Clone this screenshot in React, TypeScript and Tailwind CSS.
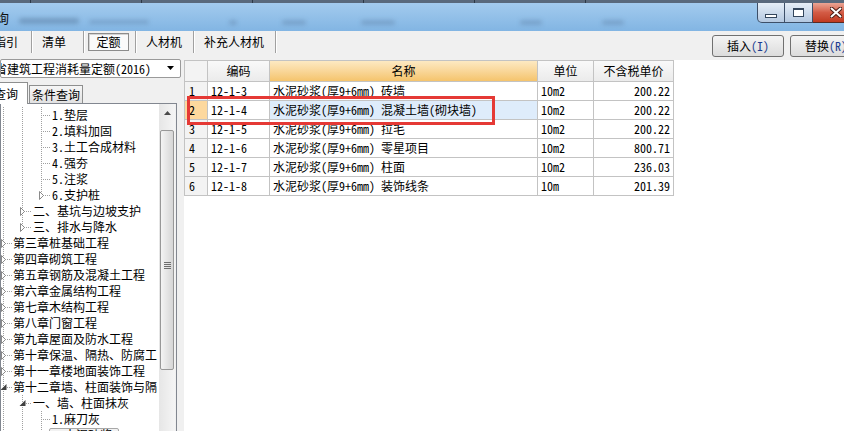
import React from "react";

type TreeRow = {
  text: string;
  depth: 0 | 1 | 2;
  kind: "leaf" | "collapsed" | "expanded";
  guides: number[];
  last?: boolean;
  selected?: boolean;
};

const GX = [2.5, 21.5, 40.5];
const TEXT_X = [12, 32, 51];

const treeRows: TreeRow[] = [
  { text: "1.垫层", depth: 2, kind: "leaf", guides: [0, 1] },
  { text: "2.填料加固", depth: 2, kind: "leaf", guides: [0, 1] },
  { text: "3.土工合成材料", depth: 2, kind: "leaf", guides: [0, 1] },
  { text: "4.强夯", depth: 2, kind: "leaf", guides: [0, 1] },
  { text: "5.注浆", depth: 2, kind: "leaf", guides: [0, 1] },
  { text: "6.支护桩", depth: 2, kind: "collapsed", guides: [0, 1], last: true },
  { text: "二、基坑与边坡支护", depth: 1, kind: "collapsed", guides: [0] },
  { text: "三、排水与降水", depth: 1, kind: "collapsed", guides: [0], last: true },
  { text: "第三章桩基础工程", depth: 0, kind: "collapsed", guides: [] },
  { text: "第四章砌筑工程", depth: 0, kind: "collapsed", guides: [] },
  { text: "第五章钢筋及混凝土工程", depth: 0, kind: "collapsed", guides: [] },
  { text: "第六章金属结构工程", depth: 0, kind: "collapsed", guides: [] },
  { text: "第七章木结构工程", depth: 0, kind: "collapsed", guides: [] },
  { text: "第八章门窗工程", depth: 0, kind: "collapsed", guides: [] },
  { text: "第九章屋面及防水工程", depth: 0, kind: "collapsed", guides: [] },
  { text: "第十章保温、隔热、防腐工", depth: 0, kind: "collapsed", guides: [] },
  { text: "第十一章楼地面装饰工程", depth: 0, kind: "collapsed", guides: [] },
  { text: "第十二章墙、柱面装饰与隔", depth: 0, kind: "expanded", guides: [] },
  { text: "一、墙、柱面抹灰", depth: 1, kind: "expanded", guides: [0] },
  { text: "1.麻刀灰", depth: 2, kind: "leaf", guides: [0, 1] },
  { text: "2.水泥砂浆", depth: 2, kind: "leaf", guides: [0, 1], selected: true },
];

const gridRows = [
  { n: "1", code: "12-1-3", name: "水泥砂浆(厚9+6mm) 砖墙", unit: "10m2", price: "200.22" },
  { n: "2", code: "12-1-4", name: "水泥砂浆(厚9+6mm) 混凝土墙(砌块墙)", unit: "10m2", price: "200.22" },
  { n: "3", code: "12-1-5", name: "水泥砂浆(厚9+6mm) 拉毛", unit: "10m2", price: "200.22" },
  { n: "4", code: "12-1-6", name: "水泥砂浆(厚9+6mm) 零星项目", unit: "10m2", price: "800.71" },
  { n: "5", code: "12-1-7", name: "水泥砂浆(厚9+6mm) 柱面", unit: "10m2", price: "236.03" },
  { n: "6", code: "12-1-8", name: "水泥砂浆(厚9+6mm) 装饰线条", unit: "10m", price: "201.39" },
];

function TreeLines({ row }: { row: TreeRow }) {
  const w = row.selected ? 48 : TEXT_X[row.depth];
  const cx = GX[row.depth];
  return (
    <svg width={w} height={16} className="shrink-0" shapeRendering="crispEdges">
      {row.guides.map((g) => (
        <line key={g} x1={GX[g]} y1={0} x2={GX[g]} y2={16} stroke="#a0a0a0" strokeDasharray="1 1" />
      ))}
      <line x1={cx} y1={0} x2={cx} y2={row.last ? 8 : 16} stroke="#a0a0a0" strokeDasharray="1 1" />
      <line x1={cx + 1} y1={8.5} x2={cx + 9} y2={8.5} stroke="#a0a0a0" strokeDasharray="1 1" />
      {row.kind === "collapsed" && (
        <path
          d={`M${cx - 2} 4.5 L${cx + 2} 8.5 L${cx - 2} 12.5 Z`}
          fill="#ffffff"
          stroke="#8a8a8a"
          shapeRendering="auto"
        />
      )}
      {row.kind === "expanded" && (
        <path d={`M${cx + 3} 5 L${cx + 3} 11 L${cx - 3} 11 Z`} fill="#404040" shapeRendering="auto" />
      )}
    </svg>
  );
}

function TitleBar() {
  return (
    <div className="h-[31px] shrink-0 flex flex-col bg-linear-to-b from-[#a6cdef] to-[#82b5e3]">
      <div className="h-[3px] bg-[#59697c] flex gap-[110px] pl-[30px]">
        <span className="w-[1px] bg-[#2c3846]" />
        <span className="w-[1px] bg-[#2c3846]" />
        <span className="w-[1px] bg-[#2c3846]" />
        <span className="w-[1px] bg-[#2c3846]" />
        <span className="w-[1px] bg-[#2c3846]" />
        <span className="w-[1px] bg-[#2c3846]" />
      </div>
      <div className="flex-1 flex items-start justify-between">
        <div className="flex items-center h-[28px]">
          <span className="-ml-[4px] text-[13px] leading-none text-[#111]">询</span>
          <span className="ml-[10px] mt-[8px] w-[60px] h-[6px] rounded-full bg-[#4c6b8e]/40 blur-[2px]" />
          <span className="ml-[10px] mt-[10px] w-[60px] h-[4px] rounded-full bg-[#4c6b8e]/30 blur-[2px]" />
          <span className="ml-[80px] mt-[10px] w-[8px] h-[5px] rounded-full bg-[#4c6b8e]/30 blur-[2px]" />
          <span className="ml-[45px] mt-[10px] w-[24px] h-[5px] rounded-full bg-[#4c6b8e]/30 blur-[2px]" />
          <span className="ml-[55px] mt-[10px] w-[34px] h-[5px] rounded-full bg-[#4c6b8e]/30 blur-[2px]" />
          <span className="ml-[125px] mt-[10px] w-[22px] h-[5px] rounded-full bg-[#4c6b8e]/30 blur-[2px]" />
          <span className="ml-[60px] mt-[10px] w-[22px] h-[5px] rounded-full bg-[#4c6b8e]/30 blur-[2px]" />
        </div>
        <div className="flex mr-[-16px] h-[20px]">
          <div className="w-[28px] h-full rounded-bl-[5px] border border-t-0 border-[#3d4f68] bg-linear-to-b from-[#e6eef7] to-[#b4c8e0] flex items-end justify-center pb-[4px]">
            <div className="w-[12px] h-[4px] border border-[#34465c] bg-white" />
          </div>
          <div className="w-[28px] h-full border border-l-0 border-t-0 border-[#3d4f68] bg-linear-to-b from-[#e6eef7] to-[#b4c8e0] flex items-center justify-center">
            <div className="w-[11px] h-[9px] border border-t-[2px] border-[#34465c] bg-white" />
          </div>
          <div className="w-[47px] h-full border border-l-0 border-t-0 border-[#5a2a22] bg-linear-to-b from-[#eaa595] via-[#d35b45] to-[#c0391f] flex items-center justify-center">
            <svg width="12" height="11" viewBox="0 0 12 11">
              <path d="M1.5 1.5 L10.5 9.5 M10.5 1.5 L1.5 9.5" stroke="#4a1a12" strokeWidth="4" strokeLinecap="round" />
              <path d="M1.5 1.5 L10.5 9.5 M10.5 1.5 L1.5 9.5" stroke="#ffffff" strokeWidth="2" strokeLinecap="round" />
            </svg>
          </div>
        </div>
      </div>
    </div>
  );
}

function Sep() {
  return (
    <div className="w-[2px] h-[22px] flex shrink-0">
      <span className="w-[1px] bg-[#a0a0a0]" />
      <span className="w-[1px] bg-white" />
    </div>
  );
}

function Toolbar() {
  return (
    <div className="h-[28px] shrink-0 flex items-start bg-[#f0f0f0]">
      <div className="-ml-[6px] w-[37px] h-[22px] flex items-center">指引</div>
      <Sep />
      <div className="w-[50px] h-[22px] flex items-center pl-[9px]">清单</div>
      <Sep />
      <div className="w-[50px] h-[22px] flex items-center pl-[3px]">
        <div className="w-[41px] h-[18px] flex items-center justify-center border border-[#8c8c8c] bg-[#fafafa] shadow-[inset_1px_1px_0_#d4d4d4]">
          定额
        </div>
      </div>
      <Sep />
      <div className="w-[56px] h-[22px] flex items-center pl-[9px]">人材机</div>
      <Sep />
      <div className="w-[80px] h-[22px] flex items-center pl-[9px]">补充人材机</div>
      <Sep />
      <div className="flex-1" />
      <div className="flex gap-[6px] mt-[4px] mr-[-18px]">
        <button className="w-[72px] h-[22px] rounded-[3px] border border-[#707070] bg-linear-to-b from-[#f4f4f4] to-[#dcdcdc] flex items-center justify-center">
          插入<span className="text-[#1d3c8f]">(I)</span>
        </button>
        <button className="w-[72px] h-[22px] rounded-[3px] border border-[#707070] bg-linear-to-b from-[#f4f4f4] to-[#dcdcdc] flex items-center justify-center">
          替换<span className="text-[#1d3c8f]">(R)</span>
        </button>
      </div>
    </div>
  );
}

function LeftPanel() {
  return (
    <div className="w-[181px] shrink-0 flex flex-col">
      <div className="h-[19px] shrink-0 flex items-center justify-between border border-[#9a9a9a] rounded-[2px] bg-white overflow-hidden">
        <span className="-ml-[6px] whitespace-nowrap">省建筑工程消耗量定额(2016)</span>
        <svg width="8" height="5" viewBox="0 0 8 5" className="mr-[5px]">
          <path d="M0 0 H7 L3.5 4 Z" fill="#000" />
        </svg>
      </div>
      <div className="h-[25px] shrink-0 flex items-end">
        <div className="-ml-[2px] w-[30px] h-[22px] bg-white border border-b-0 border-[#8e8f8f] flex items-center overflow-hidden relative z-10 -mb-[1px]">
          <span className="-ml-[5px] whitespace-nowrap">查询</span>
        </div>
        <div className="ml-[1px] w-[54px] h-[18px] bg-linear-to-b from-[#f6f6f6] to-[#e2e2e2] border border-b-0 border-[#8e8f8f] flex items-center justify-center">
          条件查询
        </div>
      </div>
      <div className="w-[177px] flex-1 min-h-0 flex bg-white border border-b-0 border-[#828790]">
        <div className="flex-1 min-w-0 overflow-hidden pt-[3px]">
          {treeRows.map((row, i) => (
            <div key={i} className="h-[16px] flex items-center whitespace-nowrap">
              <TreeLines row={row} />
              {row.selected ? (
                <span className="h-[15px] flex items-center pl-[2px] pr-[6px] border border-[#a8a8a8] rounded-[2px] bg-[#f2f2f2]">
                  {row.text}
                </span>
              ) : (
                <span className="leading-[16px]">{row.text}</span>
              )}
            </div>
          ))}
        </div>
        <div className="w-[17px] shrink-0 flex flex-col bg-linear-to-r from-[#e6e6e6] to-[#f5f5f5] border-r border-[#f0f0f0]">
          <div className="h-[17px] flex items-center justify-center">
            <svg width="7" height="4" viewBox="0 0 7 4">
              <path d="M0 4 L3.5 0 L7 4 Z" fill="#4a4a4a" />
            </svg>
          </div>
          <div className="mt-[9px] mx-[1px] h-[240px] rounded-[2px] border border-[#989898] bg-linear-to-r from-[#f4f4f4] to-[#d6d6d6] flex flex-col items-center pt-[131px] gap-[1px]">
            <span className="w-[7px] h-[1px] bg-[#6e6e6e]" />
            <span className="w-[7px] h-[1px] bg-[#6e6e6e]" />
            <span className="w-[7px] h-[1px] bg-[#6e6e6e]" />
            <span className="w-[7px] h-[1px] bg-[#6e6e6e]" />
          </div>
        </div>
      </div>
    </div>
  );
}

function RightPanel() {
  const head = "h-[21px] flex items-center justify-center border-r border-b border-[#c3c3c3]";
  const cell = "h-[19px] flex items-center border-r border-b border-[#c3c3c3] whitespace-nowrap overflow-hidden";
  return (
    <div className="flex-1 relative bg-white mt-[1px]">
      <div className="grid grid-cols-[23px_62px_268px_56px_80px] w-max border-l border-t border-[#c3c3c3]">
        <div className={`${head} bg-[#f3f3f3]`} />
        <div className={`${head} bg-linear-to-b from-[#f9f9f9] to-[#ebebeb]`}>编码</div>
        <div className={`${head} bg-linear-to-b from-[#fde9c2] to-[#f5c46c]`}>名称</div>
        <div className={`${head} bg-linear-to-b from-[#f9f9f9] to-[#ebebeb]`}>单位</div>
        <div className={`${head} bg-linear-to-b from-[#f9f9f9] to-[#ebebeb]`}>不含税单价</div>
        {gridRows.map((r) => {
          const current = r.n === "2";
          return (
            <React.Fragment key={r.n}>
              <div className={`${cell} pl-[4px] ${current ? "bg-[#fdd89d]" : "bg-[#f3f3f3]"}`}>{r.n}</div>
              <div className={`${cell} pl-[3px]`}>{r.code}</div>
              <div className={`${cell} pl-[3px] ${current ? "bg-[#deecfb]" : ""}`}>{r.name}</div>
              <div className={`${cell} pl-[3px]`}>{r.unit}</div>
              <div className={`${cell} justify-end pr-[3px]`}>{r.price}</div>
            </React.Fragment>
          );
        })}
      </div>
      <div className="absolute left-[3px] top-[36px] w-[308px] h-[29px] border-[3px] border-[#e53935]" />
    </div>
  );
}

export default function App() {
  return (
    <div className="w-[844px] h-[431px] overflow-hidden flex flex-col bg-[#f0f0f0] text-[12px] text-black font-['Noto_Sans_Mono_CJK_SC','Noto_Sans_CJK_SC',sans-serif]">
      <TitleBar />
      <Toolbar />
      <div className="flex flex-1 min-h-0">
        <LeftPanel />
        <div className="w-[3px] shrink-0" />
        <RightPanel />
      </div>
    </div>
  );
}
